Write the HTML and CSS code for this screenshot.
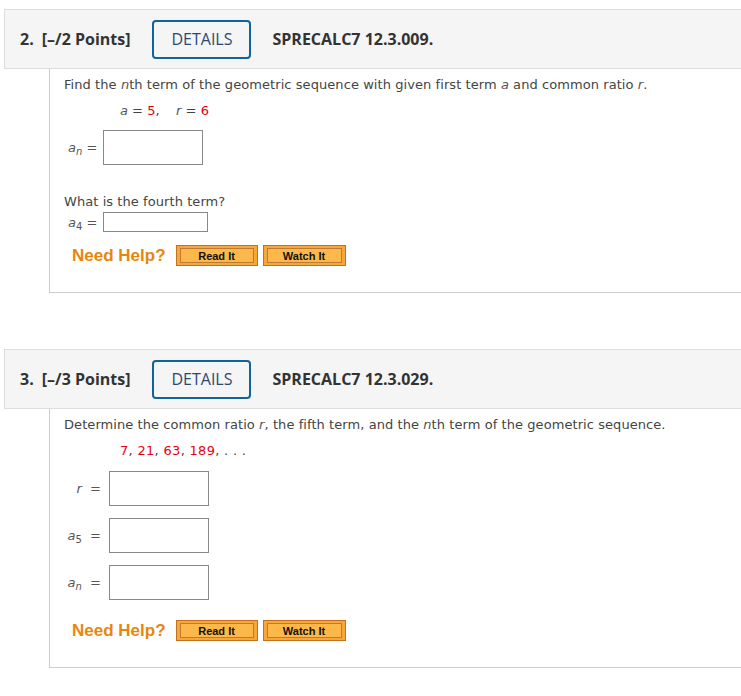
FILE: index.html
```html
<!DOCTYPE html>
<html>
<head>
<meta charset="utf-8">
<link rel="stylesheet" href="styles.css">
</head>
<body>
<div class="question q1">
  <div class="qhead">
    <span class="qnum">2.</span>
    <span class="qpts">[–/2 Points]</span>
    <span class="details">DETAILS</span>
    <span class="qcode">SPRECALC7 12.3.009.</span>
  </div>
  <div class="qbody b1">
    <p class="prompt">Find the <i>n</i>th term of the geometric sequence with given first term <i>a</i> and common ratio <i>r</i>.</p>
    <p class="math given"><i class="var">a</i> = <span class="red">5</span>, &nbsp;&nbsp; <i class="var">r</i> = <span class="red">6</span></p>
    <div class="row r-an">
      <span class="lbl l1"><i class="var">a<sub>n</sub></i> =</span>
      <span class="box big"></span>
    </div>
    <p class="prompt p4">What is the fourth term?</p>
    <div class="row">
      <span class="lbl l1"><i class="var">a</i><sub>4</sub> =</span>
      <span class="box small"></span>
    </div>
    <div class="help h1">
      <span class="needhelp">Need Help?</span>
      <span class="hbtn"><span class="hin">Read It</span></span>
      <span class="hbtn w"><span class="hin">Watch It</span></span>
    </div>
  </div>
</div>

<div class="question q2">
  <div class="qhead">
    <span class="qnum">3.</span>
    <span class="qpts">[–/3 Points]</span>
    <span class="details">DETAILS</span>
    <span class="qcode">SPRECALC7 12.3.029.</span>
  </div>
  <div class="qbody b2">
    <p class="prompt">Determine the common ratio <i>r</i>, the fifth term, and the <i>n</i>th term of the geometric sequence.</p>
    <p class="math seq"><span class="red">7</span>, <span class="red">21</span>, <span class="red">63</span>, <span class="red">189</span>, . . .</p>
    <div class="grid">
      <span class="lbl l2"><i class="var">r</i>&nbsp; =</span>
      <span class="box big"></span>
      <span class="lbl l2"><i class="var">a</i><sub>5</sub>&nbsp; =</span>
      <span class="box big"></span>
      <span class="lbl l2"><i class="var">a<sub>n</sub></i>&nbsp; =</span>
      <span class="box big"></span>
    </div>
    <div class="help h2">
      <span class="needhelp">Need Help?</span>
      <span class="hbtn"><span class="hin">Read It</span></span>
      <span class="hbtn w"><span class="hin">Watch It</span></span>
    </div>
  </div>
</div>
</body>
</html>
```

FILE: styles.css
```css
html, body {
  margin: 0;
  padding: 0;
  background: #fff;
}
body {
  font-family: "DejaVu Sans", Verdana, sans-serif;
  color: #333;
}
.question {
  margin-left: 4px;
}
.q1 { padding-top: 9px; }
.q2 { margin-top: 56px; }

.qhead {
  height: 58px;
  background: #f5f5f5;
  border: 1px solid #dddddd;
  border-right: none;
  display: flex;
  align-items: center;
  font-family: "Open Sans", sans-serif;
  font-weight: 700;
  font-size: 16px;
  color: #333;
  box-sizing: content-box;
}
.qnum { margin-left: 15px; }
.qpts { margin-left: 8px; }
.details {
  margin-left: 22px;
  width: 95px;
  height: 35px;
  border: 2px solid #11639b;
  border-radius: 4px;
  display: flex;
  align-items: center;
  justify-content: center;
  font-weight: 400;
  color: #2b4a70;
  font-size: 16px;
}
.qcode { margin-left: 21px; }

.qbody {
  margin-left: 45px;
  border-left: 1px solid #cccccc;
  border-bottom: 1px solid #cccccc;
  padding-left: 14px;
  padding-top: 6px;
  padding-bottom: 26px;
  font-size: 13px;
  color: #444;
}
.prompt {
  margin: 0;
  line-height: 20px;
  color: #444;
  letter-spacing: 0.07px;
}
.prompt i { color: #555; }
.math {
  margin: 6px 0 0 56px;
  line-height: 20px;
  color: #444;
}
.seq { letter-spacing: 0.3px; }
.red { color: #e8000e; }
.var { color: #555; }
sub {
  font-size: 10px;
  vertical-align: -3px;
  line-height: 0;
}

.row {
  display: flex;
  align-items: center;
}
.r-an { margin-top: 9px; }
.p4 { margin-top: 27px; }
.lbl {
  color: #555;
  white-space: nowrap;
}
.l1 {
  width: 35px;
  margin-left: 4px;
}
.box {
  display: block;
  box-sizing: border-box;
  border: 1px solid #888;
  background: #fff;
}
.big { width: 100px; height: 35px; }
.small { width: 105px; height: 20px; }

.grid {
  margin-top: 10px;
  display: grid;
  grid-template-columns: 37px 100px;
  column-gap: 8px;
  row-gap: 12px;
  align-items: center;
}
.l2 { text-align: right; }

.help {
  display: flex;
  align-items: center;
  margin-left: 8px;
}
.h1 { margin-top: 13px; }
.h2 { margin-top: 20px; }
.needhelp {
  font-family: "Liberation Sans", Arial, sans-serif;
  font-weight: 700;
  font-size: 17px;
  color: #e8860c;
  margin-right: 10px;
}
.hbtn {
  box-sizing: border-box;
  width: 82px;
  height: 21px;
  border: 1px solid #c27123;
  background: #f8a637;
  padding: 2px 3px;
  display: flex;
  margin-right: 5px;
}
.hbtn.w { width: 83px; }
.hin {
  flex: 1;
  border: 1px solid #c07a35;
  background: #fcb84a;
  display: flex;
  align-items: center;
  justify-content: center;
  font-family: "Liberation Sans", Arial, sans-serif;
  font-weight: 700;
  font-size: 11px;
  color: #111;
}
```
